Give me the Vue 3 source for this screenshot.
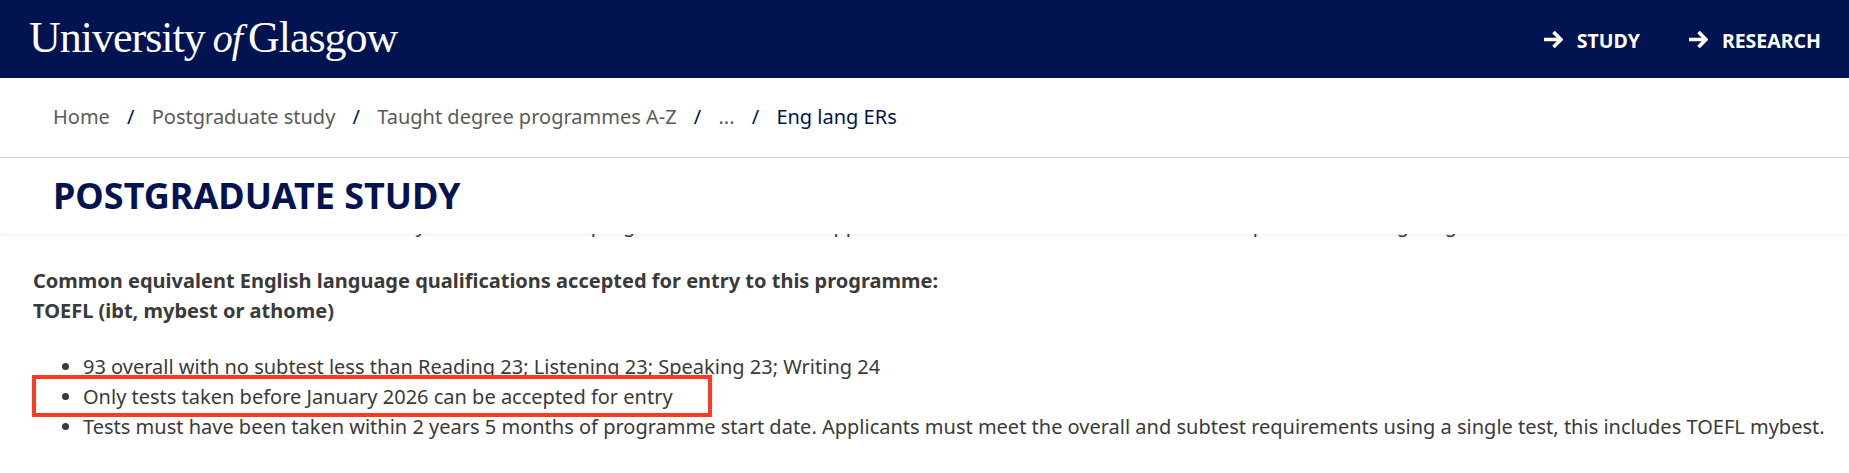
<template>
  <div class="page">
    <div class="sticky">
      <header class="topbar">
        <div class="logo">University<i>of</i>Glasgow</div>
        <nav class="topnav">
          <a v-for="link in links" :key="link" class="navlink">
            <svg width="19" height="19" viewBox="0 0 19 19">
              <path d="M0 9.5h16M9.5 2l7.5 7.5-7.5 7.5" fill="none" stroke="#fff" stroke-width="3.6" />
            </svg>
            {{ link }}
          </a>
        </nav>
      </header>
      <div class="crumbs">
        <template v-for="(crumb, i) in crumbs" :key="crumb">
          <span v-if="i > 0" class="sep">/</span>
          <span :class="{ current: i === crumbs.length - 1 }">{{ crumb }}</span>
        </template>
      </div>
      <div class="titlebar"><h1>POSTGRADUATE STUDY</h1></div>
    </div>

    <main class="content">
      <div class="peek">
        <p>Students who did not meet the levels may attend our short programme and then to appear on the enrolment list as a late entrant place on the degree go</p>
      </div>
      <p class="heading">
        <strong>Common equivalent English language qualifications accepted for entry to this programme:</strong><br />
        <strong>TOEFL (ibt, mybest or athome)</strong>
      </p>
      <div class="listwrap">
        <ul>
          <li v-for="item in items" :key="item">{{ item }}</li>
        </ul>
        <div class="highlight"></div>
      </div>
    </main>
  </div>
</template>

<script setup>
const links = ['STUDY', 'RESEARCH']
const crumbs = ['Home', 'Postgraduate study', 'Taught degree programmes A-Z', '...', 'Eng lang ERs']
const items = [
  '93 overall with no subtest less than Reading 23; Listening 23; Speaking 23; Writing 24',
  'Only tests taken before January 2026 can be accepted for entry',
  'Tests must have been taken within 2 years 5 months of programme start date. Applicants must meet the overall and subtest requirements using a single test, this includes TOEFL mybest.'
]
</script>

<style>
html, body { background: #fff; overflow: hidden; }
</style>

<style scoped>
.page { height: 473px; overflow: hidden; font-family: "Noto Sans", sans-serif; color: #3a3a3a; }
.sticky { position: relative; z-index: 2; background: #fff; box-shadow: 0 1px 4px rgba(0,0,0,.08); }
.topbar { height: 78px; background: #011451; display: flex; justify-content: space-between; align-items: center; padding: 0 28px 0 29px; }
.logo { font-family: "Liberation Serif", serif; font-size: 44px; letter-spacing: -1px; color: #fff; margin-top: -4px; white-space: nowrap; }
.logo i { font-size: 40px; margin: 0 6px 0 8px; }
.topnav { display: flex; gap: 49px; padding-top: 3px; }
.navlink { display: flex; align-items: center; gap: 14px; color: #fff; font-size: 19.5px; font-weight: 700; }
.navlink svg { margin-top: -3px; }
.crumbs { height: 80px; box-sizing: border-box; border-bottom: 1px solid #d4d4d4; display: flex; align-items: center; padding: 0 0 2px 53px; font-size: 20px; color: #5a5a5a; }
.sep { color: #011451; margin: 0 17.2px; }
.current { color: #011451; }
.titlebar { height: 76px; box-sizing: border-box; padding: 13px 0 0 53px; }
h1 { margin: 0; font-size: 36px; line-height: 50px; font-weight: 700; color: #011451; }
.content { padding: 0 0 0 33px; }
.peek { height: 6px; overflow: hidden; }
.peek p { margin: -24px 0 0; font-size: 20px; line-height: 30px; white-space: nowrap; }
.heading { margin: 26px 0 0; font-size: 20px; line-height: 30px; }
.listwrap { position: relative; margin-top: 26px; }
ul { margin: 0; padding: 0 0 0 50px; font-size: 20px; line-height: 30px; }
.highlight { position: absolute; left: -1px; top: 23px; width: 680px; height: 42px; border: 4px solid #ff3a24; box-sizing: border-box; }
</style>
